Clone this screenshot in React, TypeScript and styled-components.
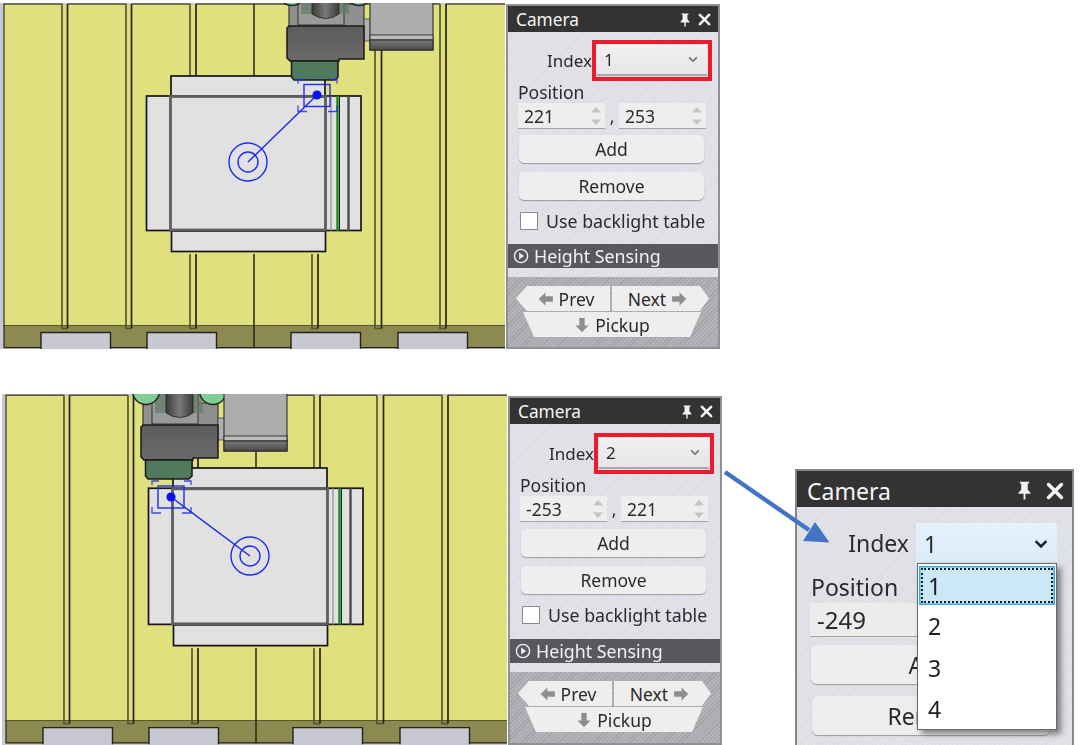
import React from "react";
import styled, { createGlobalStyle } from "styled-components";

const Global = createGlobalStyle`
  html, body { margin: 0; padding: 0; background: #fff; overflow: hidden; }
  body { font-family: "Noto Sans", "Open Sans", sans-serif; color: #2a2a2a; }
  #root { width: 1080px; height: 745px; overflow: hidden; }
`;

const hatch = `repeating-linear-gradient(135deg, #dadbe2 0 1px, #e3e4ea 1px 3px)`;
const hatchDark = `repeating-linear-gradient(135deg, #a2a2a6 0 1px, #b4b4b8 1px 3px)`;

const Page = styled.div`
  position: relative;
  width: 1080px;
  height: 745px;
  padding: 3px 0 0 0;
  box-sizing: border-box;
  filter: blur(0.35px);
`;
const Row = styled.div<{ $top?: number; $height: number }>`
  display: flex;
  align-items: flex-start;
  height: ${(p) => p.$height}px;
  margin-top: ${(p) => p.$top ?? 0}px;
`;
const View = styled.svg`
  display: block;
  flex: none;
`;
const Panel = styled.section<{ $top: number; $left: number; $height: number }>`
  flex: none;
  width: 214px;
  height: ${(p) => p.$height}px;
  margin: ${(p) => p.$top}px 0 0 ${(p) => p.$left}px;
  box-sizing: border-box;
  border: 2px solid #8f9096;
  background: ${hatch};
  display: flex;
  flex-direction: column;
  overflow: hidden;
`;
const TitleBar = styled.header`
  flex: none;
  height: 26px;
  background: #333333;
  color: #f4f4f4;
  font-size: 17.3px;
  display: flex;
  align-items: center;
  padding: 1px 7px 0 8px;
  box-sizing: border-box;
  gap: 6px;
`;
const TitleText = styled.span`
  flex: 1;
`;
const IndexRow = styled.div<{ $extra: number }>`
  display: flex;
  align-items: center;
  justify-content: flex-end;
  gap: 5px;
  height: 31px;
  margin: ${(p) => 13 + p.$extra}px 11px 0 0;
  font-size: 17px;
`;
const Select = styled.div`
  width: 110px;
  height: 31px;
  box-sizing: border-box;
  display: flex;
  align-items: center;
  justify-content: space-between;
  padding: 0 9px 0 7px;
  background: linear-gradient(#f1f1f1, #e6e6e6);
  border-bottom: 2px solid #a9a9a9;
  outline: 4px solid #ec1c2e;
  outline-offset: 1px;
`;
const FieldLabel = styled.div`
  font-size: 17.5px;
  line-height: 20px;
  margin: 6px 0 0 10px;
`;
const SpinRow = styled.div`
  display: flex;
  align-items: flex-end;
  margin: 1px 0 0 10px;
  font-size: 17.5px;
`;
const Spin = styled.div`
  width: 87px;
  height: 26px;
  box-sizing: border-box;
  display: flex;
  align-items: center;
  justify-content: space-between;
  padding: 0 3px 0 6px;
  background: #eeeeee;
  border-bottom: 1px solid #a5a5a5;
`;
const Comma = styled.span`
  width: 14px;
  text-align: center;
  line-height: 26px;
`;
const PanelButton = styled.div<{ $top: number }>`
  width: 185px;
  height: 28px;
  margin: ${(p) => p.$top}px 0 0 11px;
  box-sizing: border-box;
  display: flex;
  align-items: center;
  justify-content: center;
  background: #eeeeee;
  border-radius: 5px;
  box-shadow: 0 1px 1px #9b9b9b;
  font-size: 17.5px;
`;
const CheckRow = styled.label`
  display: flex;
  align-items: center;
  gap: 8px;
  height: 18px;
  margin: 12px 0 0 12px;
  font-size: 17.8px;
  white-space: nowrap;
`;
const CheckBox = styled.span`
  flex: none;
  width: 18px;
  height: 18px;
  box-sizing: border-box;
  background: #fff;
  border: 1px solid #8a8a8a;
`;
const SectionHeader = styled.div<{ $extra: number }>`
  flex: none;
  height: 24px;
  margin-top: ${(p) => 14 + p.$extra}px;
  background: #58595e;
  color: #f2f2f2;
  font-size: 17.8px;
  display: flex;
  align-items: center;
  gap: 5px;
  padding-left: 5px;
`;
const Gap = styled.div`
  flex: none;
  height: 9px;
`;
const NavArea = styled.div`
  flex: 1;
  background: ${hatchDark};
  padding-top: 9px;
  display: flex;
  flex-direction: column;
  align-items: flex-start;
`;
const NavRow = styled.div`
  display: flex;
  gap: 2px;
  margin-left: 8px;
`;
const NavButton = styled.div<{ $dir: "left" | "right" }>`
  width: ${(p) => (p.$dir === "left" ? 94 : 97)}px;
  height: 25px;
  display: flex;
  align-items: center;
  justify-content: center;
  gap: 5px;
  font-size: 17.5px;
  background: #eeeeee;
  padding-${(p) => p.$dir}: 6px;
  box-sizing: border-box;
  clip-path: ${(p) =>
    p.$dir === "left"
      ? "polygon(11px 0, 100% 0, 100% 100%, 11px 100%, 0 50%)"
      : "polygon(0 0, calc(100% - 9px) 0, 100% 50%, calc(100% - 9px) 100%, 0 100%)"};
`;
const PickupButton = styled.div`
  width: 178px;
  height: 25px;
  margin: 1px 0 0 15px;
  display: flex;
  align-items: center;
  justify-content: center;
  gap: 5px;
  font-size: 17.5px;
  background: #eeeeee;
  clip-path: polygon(0 0, 100% 0, calc(100% - 11px) 100%, 11px 100%);
`;

/* enlarged call-out panel */
const BigPanel = styled.section`
  position: relative;
  flex: none;
  width: 279px;
  height: 276px;
  margin: 75px 0 0 73px;
  box-sizing: border-box;
  border: 2px solid #85868c;
  border-bottom: 0;
  background: ${hatch};
  overflow: hidden;
`;
const BigTitle = styled.header`
  height: 36px;
  background: #333333;
  color: #f6f6f6;
  font-size: 23px;
  display: flex;
  align-items: center;
  padding: 3px 8px 0 10px;
  box-sizing: border-box;
  gap: 12px;
`;
const BigIndexRow = styled.div`
  display: flex;
  align-items: center;
  justify-content: flex-end;
  gap: 7px;
  height: 39px;
  margin: 16px 15px 0 0;
  padding-top: 0;
  font-size: 23px;
`;
const BigSelect = styled.div`
  width: 141px;
  height: 39px;
  box-sizing: border-box;
  display: flex;
  align-items: center;
  justify-content: space-between;
  padding: 2px 9px 0 8px;
  background: linear-gradient(#e6f2fc, #dcebf9);
`;
const BigLabel = styled.div`
  font-size: 23px;
  line-height: 32px;
  margin: 9px 0 0 14px;
`;
const BigSpin = styled.div`
  width: 128px;
  height: 34px;
  margin: 0 0 0 13px;
  box-sizing: border-box;
  display: flex;
  align-items: center;
  justify-content: space-between;
  padding: 0 8px 0 7px;
  background: #ececec;
  border-bottom: 1px solid #a5a5a5;
  font-size: 24px;
`;
const BigButton = styled.div<{ $top: number; $left: number }>`
  width: 238px;
  height: 39px;
  margin: ${(p) => p.$top}px 0 0 ${(p) => p.$left}px;
  box-sizing: border-box;
  display: flex;
  align-items: center;
  justify-content: center;
  background: #eeeeee;
  border-radius: 6px;
  box-shadow: 0 1px 1px #9b9b9b;
  font-size: 23px;
`;
const Dropdown = styled.ul`
  position: absolute;
  left: 120px;
  top: 92px;
  width: 140px;
  height: 167px;
  margin: 0;
  padding: 2px 1px 0;
  box-sizing: border-box;
  list-style: none;
  background: #fff;
  border: 1px solid #6a6a6a;
  box-shadow: 4px 4px 6px rgba(0, 0, 0, 0.45);
`;
const DropItem = styled.li<{ $active?: boolean }>`
  position: relative;
  height: ${(p) => (p.$active ? 39 : 41.5)}px;
  line-height: ${(p) => (p.$active ? 41 : 43.5)}px;
  padding-left: 9px;
  font-size: 23px;
  color: #1c1c1c;
  box-sizing: border-box;
  ${(p) =>
    p.$active
      ? `background: #cbe8f6; box-shadow: inset 0 0 0 1.5px #3aa9dc; outline: 2px dotted #1c1c1c; outline-offset: -4px;`
      : ""}
`;
const Arrow = styled.svg`
  position: absolute;
  left: 715px;
  top: 460px;
`;

/* ---------- drawing helpers ---------- */
const YELLOW = "#e1e07e";
const DARK = "#24241a";
const OLIVE = "#56562f";

function Strip({ a, b, to }: { a: number; b: number; to: number }) {
  return (
    <g>
      <rect x={a} y={3} width={b - a} height={2} fill="#c7c8d2" />
      <path d={`M${a} 4V${to}H${b}`} fill="none" stroke={OLIVE} strokeWidth={1.7} />
      <line x1={b} x2={b} y1={4} y2={to} stroke={DARK} strokeWidth={1.7} />
    </g>
  );
}

function Table() {
  const strips = [
    [62, 67.5],
    [126, 131.5],
    [190, 196],
    [312, 318],
    [375, 381.5],
    [440, 446],
  ];
  const notches = [41, 147, 291, 398];
  return (
    <g>
      <rect x={0} y={3} width={510} height={348} fill="#c7c8d2" />
      <rect x={4} y={4} width={506} height={322} fill={YELLOW} stroke={DARK} strokeWidth={1.1} />
      <rect x={4} y={325} width={506} height={23} fill="#8c8a50" />
      <line x1={4} x2={4} y1={325} y2={348} stroke={DARK} strokeWidth={1.2} />
      <line x1={4} x2={510} y1={325.5} y2={325.5} stroke={OLIVE} strokeWidth={1.2} />
      <line x1={4} x2={510} y1={347.6} y2={347.6} stroke={DARK} strokeWidth={1.3} />
      {notches.map((x) => (
        <path
          key={x}
          d={`M${x} 349V332.5H${x + 69.5}V349`}
          fill="#c7c8d2"
          stroke={DARK}
          strokeWidth={1.4}
        />
      ))}
      {strips.map(([a, b]) => (
        <Strip key={a} a={a} b={b} to={328.5} />
      ))}
      <line x1={254} x2={254} y1={4} y2={348} stroke={DARK} strokeWidth={1.5} />
      <rect x={170} y={251} width={156} height={3} fill={YELLOW} />
      {/* carton */}
      <g stroke="#161616" strokeWidth={1.7} fill="#e1e1e1">
        <rect x={171} y={76} width={154} height={20} />
        <rect x={146.5} y={96} width={25} height={134.5} />
        <rect x={171.5} y={231} width={154} height={20.5} />
        <rect x={325} y={96} width={36} height={134.5} />
        <rect x={171} y={96} width={154} height={135} stroke="none" />
      </g>
      <g fill="none">
        <rect x={170.5} y={96.5} width={155} height={133.5} stroke="#5e5e5e" strokeWidth={2.8} />
        <line x1={348.5} x2={348.5} y1={96} y2={231} stroke="#4a4a4a" strokeWidth={2.4} />
        <line x1={331} x2={331} y1={96} y2={231} stroke="#8e8e8e" strokeWidth={1.2} />
        <line x1={337.5} x2={337.5} y1={96} y2={231} stroke="#148a14" strokeWidth={2.4} />
        <line x1={339.5} x2={339.5} y1={96} y2={231} stroke="#1c1c1c" strokeWidth={1} />
      </g>
    </g>
  );
}

/* Pick-and-place head, drawn in the coordinates of the lower view */
function Head({ x, y, blockDy = 0 }: { x: number; y: number; blockDy?: number }) {
  return (
    <g transform={`translate(${x} ${y})`}>
      <rect x={143} y={403} width={75} height={23} fill="#8f8f8f" stroke="#2a2a2a" strokeWidth={1.1} />
      <rect x={152} y={390} width={46} height={34} fill="#9a9a9a" stroke="#333" strokeWidth={1} />
      <rect x={155} y={390} width={48} height={23} fill="#5f7a66" opacity={0.7} />
      <circle cx={146} cy={391} r={13.5} fill="#7fce96" stroke="#222" strokeWidth={1.4} />
      <circle cx={213} cy={391} r={13.5} fill="#7fce96" stroke="#222" strokeWidth={1.4} />
      <path d="M166 385H193V413Q180 422 166 413Z" fill="url(#cyl)" stroke="#222" strokeWidth={0.8} />
      <rect x={218} y={418} width={7} height={22} fill="#b0b0b0" stroke="#444" strokeWidth={0.8} />
      <path
        d="M143 425H218V458H193V460H144L141 457V427Z"
        fill="url(#block)"
        stroke="#1a1a1a"
        strokeWidth={1.5}
      />
      <path
        d="M145.5 460H192V476L189 479H148L145.5 476Z"
        fill="#4f7a5e"
        stroke="#1a1a1a"
        strokeWidth={1.5}
      />
      <g transform={`translate(0 ${blockDy})`}>
        <rect x={224} y={380} width={63} height={71} fill="#adadad" stroke="#2a2a2a" strokeWidth={1.1} />
        <rect x={224} y={436} width={63} height={5} fill="#bcbcbc" stroke="#2a2a2a" strokeWidth={0.9} />
        <rect x={224} y={441} width={63} height={10} fill="url(#base)" stroke="#2a2a2a" strokeWidth={1.1} />
      </g>
    </g>
  );
}

function Target({ cx, cy, dx, dy, sx, sy }: { cx: number; cy: number; dx: number; dy: number; sx: number; sy: number }) {
  const s = "#1f2cf0";
  const l = sx - 6;
  const r = sx + 33;
  const t = sy - 5;
  const b = sy + 27;
  return (
    <g fill="none" stroke={s}>
      <circle cx={cx} cy={cy} r={19} strokeWidth={1.4} />
      <circle cx={cx} cy={cy} r={10} strokeWidth={1.4} />
      <line x1={cx} y1={cy} x2={dx} y2={dy} strokeWidth={1.5} />
      <rect x={sx} y={sy} width={26} height={22} strokeWidth={1.4} />
      <path
        d={`M${l} ${t + 4}V${t}H${l + 7}M${r - 7} ${t}H${r}V${t + 4}M${l} ${b - 6}V${b}H${l + 9}M${r - 9} ${b}H${r}V${b - 6}`}
        strokeWidth={1.3}
        opacity={0.85}
      />
      <circle cx={dx} cy={dy} r={4} fill="#0a12ee" stroke="#0a12ee" strokeWidth={1.2} />
    </g>
  );
}

function Gradients() {
  return (
    <defs>
      <linearGradient id="cyl" x1="0" x2="1" y1="0" y2="0">
        <stop offset="0" stopColor="#3c3c3c" />
        <stop offset="0.5" stopColor="#7a7a7a" />
        <stop offset="1" stopColor="#3c3c3c" />
      </linearGradient>
      <linearGradient id="block" x1="0" x2="0" y1="0" y2="1">
        <stop offset="0" stopColor="#5c5c5c" />
        <stop offset="1" stopColor="#6a6a6a" />
      </linearGradient>
      <linearGradient id="base" x1="0" x2="0" y1="0" y2="1">
        <stop offset="0" stopColor="#7a7a7a" />
        <stop offset="1" stopColor="#4a4a4a" />
      </linearGradient>
    </defs>
  );
}

/* ---------- small icons ---------- */
const Pin = ({ size }: { size: number }) => (
  <svg width={size} height={size} viewBox="0 0 14 14" fill="#f2f2f2">
    <path d="M3.6 0.6H10.4V1.8H9.4V6.2L11.4 8.6V9.4H7.7V13.6H6.3V9.4H2.6V8.6L4.6 6.2V1.8H3.6Z" />
  </svg>
);
const Close = ({ size }: { size: number }) => (
  <svg width={size} height={size} viewBox="0 0 14 14" stroke="#f6f6f6" strokeWidth={2.8} strokeLinecap="round">
    <path d="M2 2L12 12M12 2L2 12" />
  </svg>
);
const Chevron = ({ dark }: { dark?: boolean }) => (
  <svg width={dark ? 14 : 10} height={dark ? 10 : 7} viewBox="0 0 10 7" fill="none" stroke={dark ? "#222" : "#6e6e6e"} strokeWidth={dark ? 1.8 : 1.6}>
    <path d="M1.2 1.4L5 5.2L8.8 1.4" />
  </svg>
);
const SpinArrows = ({ w = 12, h = 22 }: { w?: number; h?: number }) => (
  <svg width={w} height={h} viewBox="0 0 12 22" fill="#c4c4c4">
    <path d="M6 2L11 7.5H1Z M6 20L1 14.5H11Z" />
  </svg>
);
const Circled = () => (
  <svg width={16} height={16} viewBox="0 0 16 16">
    <circle cx={8} cy={8} r={6.6} fill="none" stroke="#f2f2f2" strokeWidth={1.4} />
    <path d="M6.2 4.4L11 8L6.2 11.6Z" fill="#f2f2f2" />
  </svg>
);
const BlockArrow = ({ dir }: { dir: "left" | "right" | "down" }) => {
  const rot = dir === "left" ? 180 : dir === "down" ? 90 : 0;
  return (
    <svg width={16} height={16} viewBox="0 0 15 15" fill="#8e8e8e">
      <path transform={`rotate(${rot} 7.5 7.5)`} d="M1 5H8V1.4L14.4 7.5L8 13.6V10H1Z" />
    </svg>
  );
};

function CameraPanel({ index, x, y, top, left, height, extra }: { index: string; x: string; y: string; top: number; left: number; height: number; extra: number }) {
  return (
    <Panel $top={top} $left={left} $height={height}>
      <TitleBar>
        <TitleText>Camera</TitleText>
        <Pin size={14} />
        <Close size={13} />
      </TitleBar>
      <IndexRow $extra={extra}>
        <span>Index</span>
        <Select>
          <span>{index}</span>
          <Chevron />
        </Select>
      </IndexRow>
      <FieldLabel>Position</FieldLabel>
      <SpinRow>
        <Spin>
          <span>{x}</span>
          <SpinArrows />
        </Spin>
        <Comma>,</Comma>
        <Spin>
          <span>{y}</span>
          <SpinArrows />
        </Spin>
      </SpinRow>
      <PanelButton $top={6 + extra}>Add</PanelButton>
      <PanelButton $top={9}>Remove</PanelButton>
      <CheckRow>
        <CheckBox />
        Use backlight table
      </CheckRow>
      <SectionHeader $extra={extra}>
        <Circled />
        Height Sensing
      </SectionHeader>
      <Gap />
      <NavArea>
        <NavRow>
          <NavButton $dir="left">
            <BlockArrow dir="left" />
            Prev
          </NavButton>
          <NavButton $dir="right">
            Next
            <BlockArrow dir="right" />
          </NavButton>
        </NavRow>
        <PickupButton>
          <BlockArrow dir="down" />
          Pickup
        </PickupButton>
      </NavArea>
    </Panel>
  );
}

export default function App() {
  return (
    <Page>
      <Global />
      <Row $height={346}>
        <View width={505} height={346} viewBox="0 3 505 346">
          <Gradients />
          <Table />
          <Head x={146} y={-399} blockDy={-2} />
          <Target cx={248} cy={162} dx={317} dy={95} sx={304} sy={84.5} />
        </View>
        <CameraPanel index="1" x="221" y="253" top={1} left={1} height={345} extra={0} />
      </Row>
      <Row $top={45} $height={351}>
        <View width={507} height={351} viewBox="0 394 507 351">
          <rect x={0} y={394} width={2} height={351} fill="#fff" />
          <g transform="translate(2 391.1) scale(1 1.012)">
            <Table />
          </g>
          <Head x={0} y={0} />
          <Target cx={250} cy={556} dx={171} dy={497} sx={158} sy={486} />
        </View>
        <CameraPanel index="2" x="-253" y="221" top={2} left={1} height={349} extra={1} />
        <BigPanel>
          <BigTitle>
            <TitleText>Camera</TitleText>
            <Pin size={19} />
            <Close size={18} />
          </BigTitle>
          <BigIndexRow>
            <span>Index</span>
            <BigSelect>
              <span>1</span>
              <Chevron dark />
            </BigSelect>
          </BigIndexRow>
          <BigLabel>Position</BigLabel>
          <BigSpin>
            <span>-249</span>
            <SpinArrows w={14} h={28} />
          </BigSpin>
          <BigButton $top={8} $left={14}>Add</BigButton>
          <BigButton $top={12} $left={15}>Remove</BigButton>
          <Dropdown>
            <DropItem $active>1</DropItem>
            <DropItem>2</DropItem>
            <DropItem>3</DropItem>
            <DropItem>4</DropItem>
          </Dropdown>
        </BigPanel>
      </Row>
      <Arrow width={125} height={95} viewBox="0 0 125 95">
        <line x1={10} y1={12} x2={94} y2={70} stroke="#4472c4" strokeWidth={4.5} />
        <path d="M114.5 82.5L88 81L100 62Z" fill="#4472c4" />
      </Arrow>
    </Page>
  );
}
